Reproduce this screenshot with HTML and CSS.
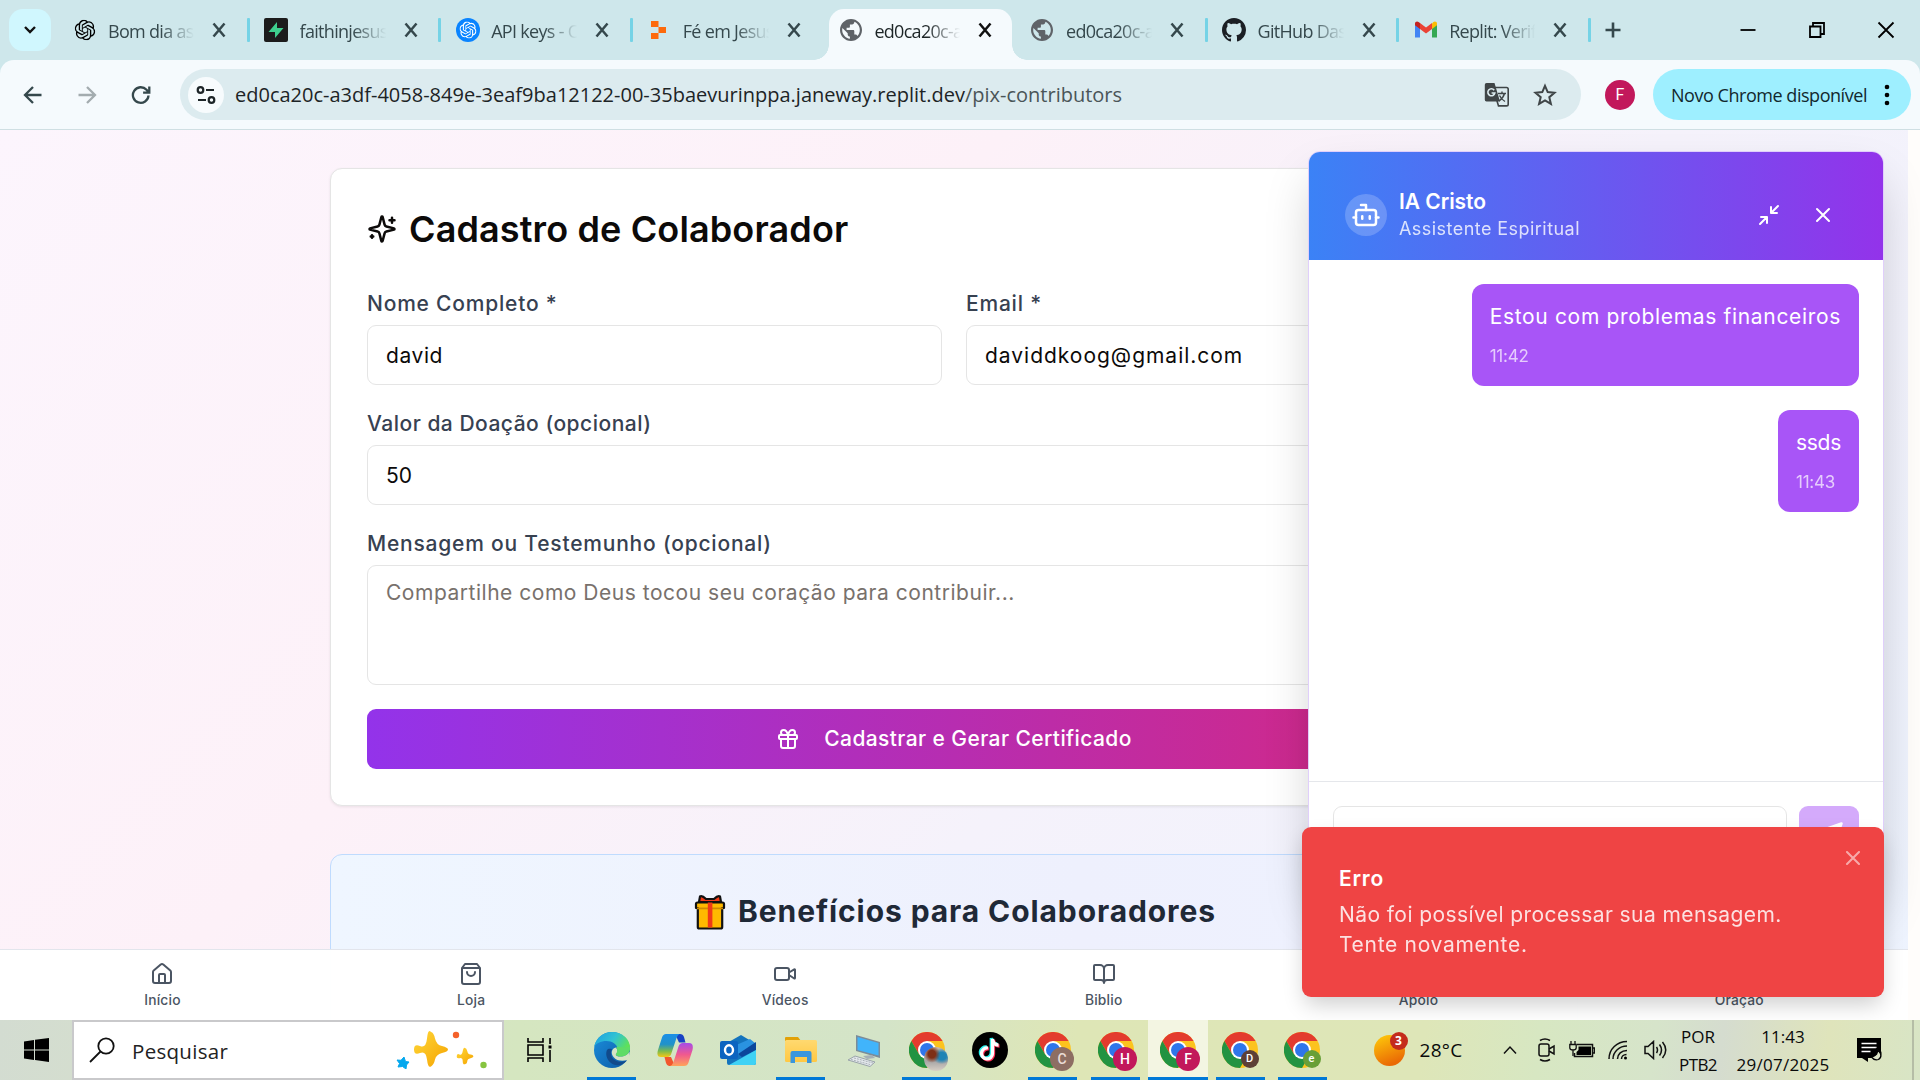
FILE: index.html
```html
<!DOCTYPE html>
<html lang="pt-BR">
<head>
<meta charset="utf-8">
<title>Cadastro de Colaborador</title>
<link rel="stylesheet" href="styles.css">
</head>
<body>
<svg class="defs" aria-hidden="true">
  <defs>
    <symbol id="x" viewBox="0 0 24 24"><path d="M6.500 5.500l11 13M17.500 5.500l-11 13"/></symbol>
    <symbol id="openai" viewBox="0 0 24 24"><path d="M22.2819 9.8211a5.9847 5.9847 0 0 0-.5157-4.9108 6.0462 6.0462 0 0 0-6.5098-2.9A6.0651 6.0651 0 0 0 4.9807 4.1818a5.9847 5.9847 0 0 0-3.9977 2.9 6.0462 6.0462 0 0 0 .7427 7.0966 5.98 5.98 0 0 0 .511 4.9107 6.051 6.051 0 0 0 6.5146 2.9001A5.9847 5.9847 0 0 0 13.2599 24a6.0557 6.0557 0 0 0 5.7718-4.2058 5.9894 5.9894 0 0 0 3.9977-2.9001 6.0557 6.0557 0 0 0-.7475-7.0729zm-9.022 12.6081a4.4755 4.4755 0 0 1-2.8764-1.0408l.1419-.0804 4.7783-2.7582a.7948.7948 0 0 0 .3927-.6813v-6.7369l2.02 1.1686a.071.071 0 0 1 .038.052v5.5826a4.504 4.504 0 0 1-4.4945 4.4944zm-9.6607-4.1254a4.4708 4.4708 0 0 1-.5346-3.0137l.142.0852 4.783 2.7582a.7712.7712 0 0 0 .7806 0l5.8428-3.3685v2.3324a.0804.0804 0 0 1-.0332.0615L9.74 19.9502a4.4992 4.4992 0 0 1-6.1408-1.6464zM2.3408 7.8956a4.485 4.485 0 0 1 2.3655-1.9728V11.6a.7664.7664 0 0 0 .3879.6765l5.8144 3.3543-2.0201 1.1685a.0757.0757 0 0 1-.071 0l-4.8303-2.7865A4.504 4.504 0 0 1 2.3408 7.872zm16.5963 3.8558L13.1038 8.364 15.1192 7.2a.0757.0757 0 0 1 .071 0l4.8303 2.7913a4.4944 4.4944 0 0 1-.6765 8.1042v-5.6772a.79.79 0 0 0-.407-.667zm2.0107-3.0231l-.142-.0852-4.7735-2.7818a.7759.7759 0 0 0-.7854 0L9.409 9.2297V6.8974a.0662.0662 0 0 1 .0284-.0615l4.8303-2.7866a4.4992 4.4992 0 0 1 6.6802 4.66zM8.3065 12.863l-2.02-1.1638a.0804.0804 0 0 1-.038-.0567V6.0742a4.4992 4.4992 0 0 1 7.3757-3.4537l-.142.0805L8.704 5.459a.7948.7948 0 0 0-.3927.6813zm1.0976-2.3654l2.602-1.4998 2.6069 1.4998v2.9994l-2.5974 1.4997-2.6067-1.4997Z"/></symbol>
    <symbol id="globe" viewBox="2 2 20 20"><path d="M12 2C6.48 2 2 6.48 2 12s4.480 10 10 10 10-4.480 10-10S17.520 2 12 2zm-1 17.930c-3.950-.49-7-3.850-7-7.930 0-.62.08-1.210.21-1.790L9 15v1c0 1.100.9 2 2 2v1.930zm6.900-2.540c-.26-.81-1-1.390-1.900-1.390h-1v-3c0-.55-.45-1-1-1H8v-2h2c.55 0 1-.45 1-1V7h2c1.100 0 2-.9 2-2v-.41c2.930 1.190 5 4.060 5 7.410 0 2.080-.8 3.970-2.100 5.390z"/></symbol>
    <symbol id="chrome" viewBox="0 0 36 36">
      <circle cx="18" cy="18" r="18" fill="#fcc31e"/>
      <path d="M2.400 9A18 18 0 0 1 33.600 9H18L10.200 22.500Z" fill="#e33b2e"/>
      <path d="M2.400 9A18 18 0 0 0 18 36L25.800 22.500H10.200Z" fill="#229342"/>
      <circle cx="18" cy="18" r="9" fill="#fff"/>
      <circle cx="18" cy="18" r="7" fill="#2f76ea"/>
    </symbol>
    <linearGradient id="gEdge" x1="0" y1="0" x2="1" y2=".5"><stop offset="0" stop-color="#1b9de2"/><stop offset=".55" stop-color="#31c3d3"/><stop offset="1" stop-color="#62e44f"/></linearGradient>
    <linearGradient id="gEdge2" x1="0" y1="0" x2="1" y2="1"><stop offset="0" stop-color="#1b8fdd"/><stop offset="1" stop-color="#0c59a4"/></linearGradient>
    <linearGradient id="gCopA" x1="0" y1="0" x2="0" y2="1"><stop offset="0" stop-color="#1a8fe8"/><stop offset=".45" stop-color="#2192c9"/><stop offset=".75" stop-color="#7fbb4b"/><stop offset="1" stop-color="#f4c816"/></linearGradient>
    <linearGradient id="gCopB" x1="0" y1="0" x2="0" y2="1"><stop offset="0" stop-color="#a64be8"/><stop offset=".5" stop-color="#f0598f"/><stop offset="1" stop-color="#ffa35a"/></linearGradient>
    <linearGradient id="gSun" x1="0" y1="0" x2=".4" y2="1"><stop offset="0" stop-color="#ffce0a"/><stop offset="1" stop-color="#ea6a05"/></linearGradient>
    <linearGradient id="gStar" x1="0" y1="0" x2="1" y2="1"><stop offset="0" stop-color="#ffd83a"/><stop offset="1" stop-color="#f5a300"/></linearGradient>
    <linearGradient id="gFold" x1="0" y1="0" x2="0" y2="1"><stop offset="0" stop-color="#ffd970"/><stop offset="1" stop-color="#ffc843"/></linearGradient>
  </defs>
</svg>

<header class="tabstrip">
  <div class="tab-search"><svg width="16" height="16" viewBox="0 0 16 16"><path d="M3 5l5 5 5-5"/></svg></div>
  <div class="tab sep"><svg class="fav" viewBox="-2 -2 28 28"><use href="#openai" width="24" height="24"/></svg><span class="label">Bom dia assistente</span><svg class="close"><use href="#x"/></svg></div>
  <div class="tab sep"><svg class="fav" viewBox="0 0 24 24"><rect width="24" height="24" rx="2" fill="#1c1c1c"/><path d="M13 4L4.500 14H11V20L19.500 10H13Z" fill="#3ecf8e"/></svg><span class="label">faithinjesus</span><svg class="close"><use href="#x"/></svg></div>
  <div class="tab sep"><svg class="fav" viewBox="0 0 24 24"><circle cx="12" cy="12" r="12" fill="#0a84ff"/><use href="#openai" x="3.500" y="3.500" width="17" height="17" fill="#fff"/></svg><span class="label">API keys - OpenAI</span><svg class="close"><use href="#x"/></svg></div>
  <div class="tab"><svg class="fav" viewBox="0 0 24 24"><path d="M4 3h7.500v6H4zM4 15h7.500v6H4zM11.500 9H19v6h-7.500z" fill="#fd6a0c"/></svg><span class="label">Fé em Jesus</span><svg class="close"><use href="#x"/></svg></div>
  <div class="tab active"><svg class="fav grey" viewBox="0 0 24 24"><use href="#globe" x="1" y="1" width="22" height="22"/></svg><span class="label">ed0ca20c-a3df</span><svg class="close"><use href="#x"/></svg></div>
  <div class="tab sep"><svg class="fav grey" viewBox="0 0 24 24"><use href="#globe" x="1" y="1" width="22" height="22"/></svg><span class="label">ed0ca20c-a3df</span><svg class="close"><use href="#x"/></svg></div>
  <div class="tab sep"><svg class="fav" viewBox="0 0 16 16" fill="#1b1f24"><path d="M8 0C3.580 0 0 3.580 0 8c0 3.540 2.290 6.530 5.470 7.590.4.070.55-.17.55-.38 0-.19-.01-.82-.01-1.490-2.010.37-2.530-.49-2.690-.94-.09-.23-.48-.94-.82-1.130-.28-.15-.68-.52-.01-.53.63-.01 1.080.58 1.230.82.72 1.210 1.870.87 2.330.66.07-.52.28-.87.51-1.070-1.780-.2-3.640-.89-3.640-3.950 0-.87.31-1.590.82-2.150-.08-.2-.36-1.020.08-2.120 0 0 .67-.21 2.200.82.64-.18 1.320-.27 2-.27.68 0 1.360.09 2 .27 1.530-1.040 2.200-.82 2.200-.82.44 1.100.16 1.920.08 2.120.51.56.82 1.270.82 2.150 0 3.070-1.870 3.750-3.650 3.950.29.25.54.73.54 1.480 0 1.070-.01 1.930-.01 2.200 0 .21.15.46.55.38A8.013 8.013 0 0 0 16 8c0-4.420-3.580-8-8-8z"/></svg><span class="label">GitHub Dashboard</span><svg class="close"><use href="#x"/></svg></div>
  <div class="tab sep"><svg class="fav" viewBox="0 0 24 24"><path d="M1 6v13.500h5V10z" fill="#4285f4"/><path d="M18 10v9.500h5V6z" fill="#34a853"/><path d="M18 5.500V11l5-3.800V5.500c0-2-2.300-2.700-3.600-1.500z" fill="#fbbc04"/><path d="M6 11V5l6 4.600L18 5v6l-6 4.500z" fill="#ea4335"/><path d="M1 5.500v1.700L6 11V5L4.600 4C3.300 2.800 1 3.500 1 5.500z" fill="#c5221f"/></svg><span class="label">Replit: Verify</span><svg class="close"><use href="#x"/></svg></div>
  <div class="new-tab"><svg width="18" height="18" viewBox="0 0 18 18"><path d="M9 1.500v15M1.500 9h15"/></svg></div>
  <div class="win">
    <span><svg width="18" height="18" viewBox="0 0 18 18"><path d="M1.500 9h15"/></svg></span>
    <span><svg width="18" height="18" viewBox="0 0 18 18"><path d="M2 5.500h10.500V16H2zM5 5V2h11v11h-3"/></svg></span>
    <span><svg width="18" height="18" viewBox="0 0 18 18"><path d="M1.500 1.500l15 15M16.500 1.500l-15 15"/></svg></span>
  </div>
</header>

<div class="toolbar-wrap"><div class="toolbar">
  <span class="tb-btn"><svg width="20" height="20" viewBox="0 0 20 20"><path d="M18.500 10H2.500M10 2L2 10l8 8"/></svg></span>
  <span class="tb-btn off"><svg width="20" height="20" viewBox="0 0 20 20"><path d="M1.500 10h16M10 2l8 8-8 8"/></svg></span>
  <span class="tb-btn"><svg width="20" height="20" viewBox="0 0 20 20"><path d="M17.500 10.500A7.800 7.800 0 1 1 15.500 4.800L18 7.500M18.300 1.500v6.200h-6.200"/></svg></span>
  <div class="omnibox">
    <span class="site"><svg width="20" height="20" viewBox="0 0 20 20"><circle cx="4.500" cy="5" r="2.800"/><path d="M10 5h8M2 15h8"/><circle cx="15.500" cy="15" r="2.800"/></svg></span>
    <span class="url">ed0ca20c-a3df-4058-849e-3eaf9ba12122-00-35baevurinppa.janeway.replit.dev<i>/pix-contributors</i></span>
    <svg class="translate" width="26" height="26" viewBox="0 0 26 26"><path d="M9 5.500h13.500a1.700 1.700 0 0 1 1.700 1.700v15a1.700 1.700 0 0 1-1.700 1.700H14.500L9 5.500z" fill="none" stroke="#3f4547" stroke-width="1.600"/><path d="M2.500 1h8l5.500 18.500H2.500A1.700 1.700 0 0 1 .8 17.800V2.700A1.700 1.700 0 0 1 2.500 1z" fill="#3f4547"/><path d="M10.200 8.200A3.500 3.500 0 1 0 10.800 11H7.600" fill="none" stroke="#dcebef" stroke-width="1.600"/><path d="M14 11.500h8M18 9.500v2M20.500 11.500c-.8 3-2.500 5.500-5.500 7.500M15.500 13.500c1 2 3 4.500 5.500 6" fill="none" stroke="#3f4547" stroke-width="1.400"/></svg>
    <svg class="star" width="24" height="24" viewBox="0 0 24 24"><path d="M12 2.800l2.700 6.300 6.800.6-5.200 4.500 1.600 6.700-5.900-3.600-5.900 3.600 1.600-6.700-5.200-4.500 6.800-.6z"/></svg>
  </div>
  <span class="profile">F</span>
  <div class="update"><span>Novo Chrome disponível</span><svg width="6" height="22" viewBox="0 0 6 22"><circle cx="3" cy="3" r="2.300"/><circle cx="3" cy="11" r="2.300"/><circle cx="3" cy="19" r="2.300"/></svg></div>
</div></div>

<div class="viewport">
  <main class="page">
    <section class="card">
      <h1 class="card-title"><svg class="lu" width="30" height="30" viewBox="0 0 24 24"><path d="M9.937 15.500A2 2 0 0 0 8.500 14.063l-6.135-1.582a.5.5 0 0 1 0-.962L8.500 9.936A2 2 0 0 0 9.937 8.500l1.582-6.135a.5.5 0 0 1 .963 0L14.063 8.500A2 2 0 0 0 15.500 9.937l6.135 1.581a.5.5 0 0 1 0 .964L15.500 14.063a2 2 0 0 0-1.437 1.437l-1.582 6.135a.5.5 0 0 1-.963 0zM20 3v4M22 5h-4M4 17v2M5 18H3"/></svg>Cadastro de Colaborador</h1>
      <div class="form">
        <div class="row">
          <label class="field"><span>Nome Completo *</span><div class="input">david</div></label>
          <label class="field"><span>Email *</span><div class="input email">daviddkoog@gmail.com</div></label>
        </div>
        <label class="field amount"><span>Valor da Doação (opcional)</span><div class="input num">50</div></label>
        <label class="field"><span>Mensagem ou Testemunho (opcional)</span><div class="input area">Compartilhe como Deus tocou seu coração para contribuir...</div></label>
        <div class="submit"><svg class="lu" width="24" height="24" viewBox="0 0 24 24"><rect x="3" y="8" width="18" height="4" rx="1"/><path d="M12 8v13M19 12v7a2 2 0 0 1-2 2H7a2 2 0 0 1-2-2v-7M7.500 8a2.500 2.500 0 0 1 0-5A4.800 8 0 0 1 12 8a4.800 8 0 0 1 4.500-5 2.500 2.500 0 0 1 0 5"/></svg>Cadastrar e Gerar Certificado</div>
      </div>
    </section>
    <section class="benefits">
      <h2><svg width="32" height="36" viewBox="0 0 32 36"><path d="M5 8L6 2.500Q8 1 12 5h8q4-4 6-2.500L27 8z" fill="#f03a17" stroke="#111" stroke-width="2.200" stroke-linejoin="round"/><path d="M3.500 8.500h25a1.500 1.500 0 0 1 1.500 1.500v4h-1.800v19a1.500 1.500 0 0 1-1.500 1.500H5.300A1.500 1.500 0 0 1 3.800 33V14H2v-4a1.500 1.500 0 0 1 1.500-1.500z" fill="#ffb900" stroke="#111" stroke-width="2.200" stroke-linejoin="round"/><path d="M3 13.500h26v1.800H3z" fill="#d08a00"/><path d="M13.800 8.500h4.600v25h-4.600z" fill="#f03a17"/></svg>Benefícios para Colaboradores</h2>
    </section>
  </main>

  <aside class="chat">
    <div class="chat-head">
      <span class="bot"><svg class="lu" width="30" height="30" viewBox="0 0 24 24"><path d="M12 8V4H8"/><rect x="4" y="8" width="16" height="12" rx="2"/><path d="M2 14h2M20 14h2M15 13v2M9 13v2"/></svg></span>
      <div class="who"><b>IA Cristo</b><span>Assistente Espiritual</span></div>
      <span class="hb"><svg class="lu" width="24" height="24" viewBox="0 0 24 24"><path d="M4 14h6v6M20 10h-6V4M14 10l7-7M3 21l7-7"/></svg></span>
      <span class="hb"><svg class="lu" width="24" height="24" viewBox="0 0 24 24"><path d="M18 6L6 18M6 6l12 12"/></svg></span>
    </div>
    <div class="msgs">
      <div class="msg"><p>Estou com problemas financeiros</p><time>11:42</time></div>
      <div class="msg short"><p>ssds</p><time>11:43</time></div>
    </div>
    <div class="compose"><div class="chat-input"></div><div class="send"><svg class="lu" width="30" height="30" viewBox="0 0 24 24"><path d="M22 2L15 22l-4-9-9-4zM22 2L11 13"/></svg></div></div>
  </aside>

  <nav class="bottom">
    <a><svg class="lu" width="24" height="24" viewBox="0 0 24 24"><path d="M15 21v-8a1 1 0 0 0-1-1h-4a1 1 0 0 0-1 1v8"/><path d="M3 10a2 2 0 0 1 .709-1.528l7-6a2 2 0 0 1 2.582 0l7 6A2 2 0 0 1 21 10v9a2 2 0 0 1-2 2H5a2 2 0 0 1-2-2z"/></svg>Início</a>
    <a><svg class="lu" width="24" height="24" viewBox="0 0 24 24"><path d="M6 2L3 6v14a2 2 0 0 0 2 2h14a2 2 0 0 0 2-2V6l-3-4zM3 6h18M16 10a4 4 0 0 1-8 0"/></svg>Loja</a>
    <a><svg class="lu" width="24" height="24" viewBox="0 0 24 24"><path d="M16 13l5.223 3.482a.5.5 0 0 0 .777-.416V7.870a.5.5 0 0 0-.752-.432L16 10.500"/><rect x="2" y="6" width="14" height="12" rx="2"/></svg>Vídeos</a>
    <a><svg class="lu" width="24" height="24" viewBox="0 0 24 24"><path d="M12 7v14M3 18a1 1 0 0 1-1-1V4a1 1 0 0 1 1-1h5a4 4 0 0 1 4 4 4 4 0 0 1 4-4h5a1 1 0 0 1 1 1v13a1 1 0 0 1-1 1h-6a3 3 0 0 0-3 3 3 3 0 0 0-3-3z"/></svg>Biblio</a>
    <a><svg class="lu" width="24" height="24" viewBox="0 0 24 24"><path d="M19 14c1.490-1.460 3-3.210 3-5.500A5.500 5.500 0 0 0 16.500 3c-1.760 0-3 .5-4.500 2-1.500-1.500-2.740-2-4.500-2A5.500 5.500 0 0 0 2 8.500c0 2.300 1.500 4.050 3 5.500l7 7z"/></svg>Apoio</a>
    <a><svg class="lu" width="24" height="24" viewBox="0 0 24 24"><path d="M7.900 20A9 9 0 1 0 4 16.100L2 22z"/></svg>Oração</a>
  </nav>

  <div class="toast">
    <b>Erro</b>
    <p><span class="l1">Não foi possível processar sua mensagem.</span><br><span class="l2">Tente novamente.</span></p>
    <svg class="lu" width="24" height="24" viewBox="0 0 24 24"><path d="M18 6L6 18M6 6l12 12"/></svg>
  </div>
</div>

<footer class="taskbar">
  <span class="start"><svg width="25" height="24" viewBox="0 0 25 24"><path d="M0 3.500L10 2v9.500H0zM11 1.800L25 0v11.500H11zM0 12.500h10V22L0 20.500zM11 12.500h14V24l-14-2z"/></svg></span>
  <div class="search"><svg width="26" height="26" viewBox="0 0 26 26"><circle cx="17" cy="9" r="7.700"/><path d="M11.500 14.500L1 25"/></svg><span>Pesquisar</span>
    <svg class="sparks" width="92" height="38" viewBox="0 0 92 38"><path d="M35 1q2.500 0 4 6.500t7 7.500q6 1.500 6 3.500t-6 3.500-7 6.500-4 7-4-7-7-6.500-6-3.500 6-3.500 7-7.500T35 1z" fill="url(#gStar)"/><path d="M69 17q1.500 0 2.300 3.300t3.200 3.200 2.800 1.500-2.800 2.200-3.200 3-2.300 3-2.300-3-3.200-3-2.800-2.200 2.800-1.500 3.200-3.200T69 17z" fill="url(#gStar)"/><path d="M8 26l1.500 4.500 3.500.5-2.500 3-.5 4-3.500-2.500L2 36l1.500-3.500L1 29l4 .3z" fill="#05a8ee" stroke="#05a8ee" stroke-linejoin="round"/><circle cx="60" cy="4" r="3.200" fill="#f4612a"/><circle cx="87.500" cy="34" r="3.200" fill="#86c440"/></svg></div>
  <span class="taskview"><svg width="26" height="24" viewBox="0 0 26 24"><path d="M1 0v4h15V0M1 24v-4h15v4M1 7h15v10H1zM23 0v6M23 12v12" /><path d="M21.500 7.500h3v3h-3z" fill="#000" stroke="none"/></svg></span>
  <div class="apps">
    <span class="app on"><svg width="36" height="36" viewBox="0 0 36 36"><circle cx="18" cy="18" r="18" fill="url(#gEdge2)"/><path d="M0 15C2 5.500 9.500 0 18 0c10.500 0 18 7.500 18 15.500 0 6-4.500 9-9 9-3 0-5.500-1-5-2.500 1-1.500 1.500-2.500 1.500-4.500C23.500 12 18 9 12.500 9 6.500 9 2 11.500 0 15z" fill="url(#gEdge)"/><path d="M13 18c-1.500 3-1 9 4 13 5 3.500 11 3 16-2.500-3 1.500-7 2-10.500.5-5-2-6.500-7-4.500-12-2-.5-4-.5-5 1z" fill="#114a8b"/><path d="M22 15.500c2 2.500 1.500 5 0 6.500-1 2 3 2.800 6 2.500 3-.3 6-2 7.500-5L36 27l-2.500 1c-5 1.500-11 1-14-3s-2-8.500 2.500-9.500z" fill="#d6e4c4"/><path d="M22 15.500C27 14 32 17 36 14v2.500c-.3 4-4 8-9 8-3 0-5.500-1-5-2.500 1.500-2 2-4.500 0-6.500z" fill="#5fdc67"/></svg></span>
    <span class="app"><svg width="36" height="34" viewBox="0 0 36 34"><path d="M20 1h3q3 0 4 3l1.500 5.500H22L18 1z" fill="#1742c4"/><path d="M9 1h13.500q-2 1-3 4l-5 15q-1 4-4 4H4Q-1 24 1 17L5 4.500Q6 1 9 1z" fill="url(#gCopA)"/><path d="M13 33h-1q-2 0-3-3L7.500 24H14l4 9z" fill="#f2572d"/><path d="M27 33H13q2.500-1 3.500-4l5-15.500q1-3.500 4-3.500H32q5 0 3.500 7L31.500 29.500Q30.500 33 27 33z" fill="url(#gCopB)"/></svg></span>
    <span class="app"><svg width="36" height="32" viewBox="0 0 36 32"><path d="M7 9L21 1l15 9v19q0 2-2 2H9q-2 0-2-2z" fill="#1474bd"/><path d="M14 12L30 5l5 4-17 12z" fill="#2a93e0"/><path d="M18 20L36 8v8L22 23z" fill="#0b469b"/><path d="M9 31l27-15v13q0 2-2 2z" fill="#3fd2f5"/><rect y="7" width="18" height="18" rx="2" fill="#0b64c0"/><ellipse cx="9" cy="16" rx="4" ry="4.700" fill="none" stroke="#fff" stroke-width="2.400"/></svg></span>
    <span class="app on"><svg width="34" height="28" viewBox="0 0 34 28"><path d="M1 2q0-1 1-1h12l3 4H1z" fill="#e2a107"/><rect x="1" y="4" width="32" height="22" rx="1.500" fill="url(#gFold)"/><path d="M6.500 27V17q0-2 2-2h17q2 0 2 2v10h-4.500v-6H11v6z" fill="#3a96dd"/></svg></span>
    <span class="app"><svg width="34" height="34" viewBox="0 0 34 34"><path d="M9 2l24 7v16L9 18z" fill="#7b8c99"/><path d="M10.500 4L31.500 10v12.500L10.500 17z" fill="#41b4fb"/><path d="M16 23l9-1 3 3-8 1z" fill="#a5b0b6"/><path d="M1 27l7-4 20 6-5 4.500z" fill="#e4e8ec" stroke="#9aa4aa"/><path d="M4 26.500l19 5M7 25l19 5" stroke="#a9b1b8" stroke-dasharray="2 1"/></svg></span>
    <span class="app on"><svg width="36" height="36"><use href="#chrome"/></svg><em class="photo"></em></span>
    <span class="app"><svg width="36" height="36" viewBox="0 0 36 36"><circle cx="18" cy="18" r="18"/><g fill="none" stroke-width="3.300"><path d="M16 16a5.500 5.500 0 1 0 4.500 5.500V7c.5 4 3 6 6 6" stroke="#25f4ee" transform="translate(-1.200 -1)"/><path d="M16 16a5.500 5.500 0 1 0 4.500 5.500V7c.5 4 3 6 6 6" stroke="#fe2c55" transform="translate(1 1)"/><path d="M16 16a5.500 5.500 0 1 0 4.500 5.500V7c.5 4 3 6 6 6" stroke="#fff"/></g></svg></span>
    <span class="app on"><svg width="36" height="36"><use href="#chrome"/></svg><em class="c">C</em></span>
    <span class="app on"><svg width="36" height="36"><use href="#chrome"/></svg><em class="pink">H</em></span>
    <span class="app on current"><svg width="36" height="36"><use href="#chrome"/></svg><em class="pink">F</em></span>
    <span class="app on late"><svg width="36" height="36"><use href="#chrome"/></svg><em class="small d">D</em></span>
    <span class="app on late"><svg width="36" height="36"><use href="#chrome"/></svg><em class="small e">e</em></span>
  </div>
  <div class="weather"><span class="sun"><svg width="31" height="31" viewBox="0 0 31 31"><circle cx="15.500" cy="15.500" r="15.500" fill="url(#gSun)"/></svg><em>3</em></span><span>28°C</span></div>
  <span class="tray chev"><svg width="14" height="10" viewBox="0 0 14 10"><path d="M1 8.500l6-6.500 6 6.500"/></svg></span>
  <span class="tray cam"><svg width="18" height="24" viewBox="0 0 18 24"><rect x="1" y="6" width="10" height="12" rx="2"/><path d="M11 11l5-3v8l-5-3M2 2.500q5-3 10 0M2 21.500q5 3 10 0"/></svg></span>
  <span class="tray bat"><svg width="26" height="20" viewBox="0 0 26 20"><path d="M8 4.500h15.500v12H5.500V13M24 8h1.500v5H24"/><path d="M9.500 6.500H22v8.500H7.500v-3l2-2z" fill="#000" stroke="none"/><path d="M2 1v3M6 1v3M.8 4.500h6.400V8Q7 10 4 10T.8 8zM4 10v6" stroke-width="1.300"/></svg></span>
  <span class="tray wifi"><svg width="20" height="20" viewBox="0 0 20 20"><path d="M1 19C1 9 9 1.500 19 1.500M5 19C5 11.500 11.500 6 19 6M9.500 19c0-5 4-8.500 9.500-8.500M13.500 19c0-2.500 2-4.500 5-4.500"/><circle cx="17.500" cy="18" r="1.500" fill="#000" stroke="none"/></svg></span>
  <span class="tray vol"><svg width="23" height="20" viewBox="0 0 23 20"><path d="M1 6.500h3l5.500-5v17L4 13.500H1zM12.500 7q2 3 0 6M15.500 4.500q4 5.500 0 11M18.500 2q6.500 8 0 16"/></svg></span>
  <div class="two lang"><span>POR</span><span class="kb">PTB2</span></div>
  <div class="two clock"><span>11:43</span><span class="date">29/07/2025</span></div>
  <span class="notif"><svg width="26" height="26" viewBox="0 0 26 26"><path d="M0 1h24v13a5 5 0 0 1-6 7h-7v4l-6-4H0z"/><path d="M4.500 6.500h15M4.500 10.500h15M4.500 14.500h9" stroke="#fff" stroke-width="1.400"/><path d="M20 12.500q2 5.500-5.500 7.500 3 4 7 2.500 5.500-4-1.500-10z" fill="#dde5c8" stroke="#000" stroke-width="1.300"/></svg></span>
  <span class="peek"></span>
</footer>
</body>
</html>
```
FILE: styles.css
```css
* { box-sizing: border-box; }
body {
  margin: 0;
  width: 1920px;
  height: 1080px;
  overflow: hidden;
  display: flex;
  flex-direction: column;
  font-family: Inter, "Open Sans", sans-serif;
  font-size: 21px;
  line-height: 30px;
}
h1, h2, p { margin: 0; }
svg { flex: none; display: block; }
.defs { position: absolute; width: 0; height: 0; }
.lu { fill: none; stroke: currentColor; stroke-width: 2; stroke-linecap: round; stroke-linejoin: round; }

/* browser tab strip */
.tabstrip {
  height: 60px;
  background: #cee7eb;
  display: flex;
  align-items: center;
  font: 18px/24px "Open Sans", sans-serif;
  color: #35484c;
  flex: none;
}
.tab-search {
  width: 42px; height: 42px;
  margin: 0 5px 0 9px;
  border-radius: 14px;
  background: #d0f7fe;
  display: grid;
  place-items: center;
}
.tab-search svg { fill: none; stroke: #111; stroke-width: 2.4; }
.tab {
  width: 191.6px; height: 60px;
  display: flex;
  align-items: center;
  position: relative;
  padding-left: 16.5px;
  flex: none;
}
.fav { width: 24px; height: 24px; margin-right: 11.5px; }
.fav.grey { fill: #5f6368; }
.label {
  width: 88px;
  margin-top: 2px;
  overflow: hidden;
  white-space: nowrap;
  letter-spacing: -0.7px;
  -webkit-mask-image: linear-gradient(90deg, #000 60%, transparent 98%);
  mask-image: linear-gradient(90deg, #000 60%, transparent 98%);
}
.close { width: 24px; height: 24px; margin-left: 11px; stroke: #35484c; stroke-width: 2.5; }
.tab.sep::after {
  content: "";
  position: absolute;
  right: -2px; top: 18px;
  width: 3px; height: 24px;
  border-radius: 1px;
  background: #75d3e6;
}
.tab.active { color: #1c2426; z-index: 1; }
.tab.active .close { stroke: #111; }
.tab.active > * { position: relative; z-index: 1; }
.tab.active::before {
  content: "";
  position: absolute;
  left: 6.500px; top: 9px;
  width: 183px; height: 51px;
  border-radius: 15px 15px 0 0;
  background: #f5fafd;
}
.tab.active::after {
  content: "";
  position: absolute;
  left: -8.500px; bottom: 0;
  width: 213px; height: 15px;
  background:
    radial-gradient(circle at 0 0, transparent 14.5px, #f5fafd 15px) left / 15px 15px no-repeat,
    radial-gradient(circle at 100% 0, transparent 14.5px, #f5fafd 15px) right / 15px 15px no-repeat;
  z-index: 0;
}
.new-tab { width: 42px; margin-left: 3px; display: grid; place-items: center; }
.new-tab svg { stroke: #35484c; stroke-width: 2.6; }
.win { margin-left: auto; display: flex; }
.win span { width: 69px; display: grid; place-items: center; }
.win svg { fill: none; stroke: #000; stroke-width: 1.8; }

/* toolbar */
.toolbar-wrap { background: #cee7eb; flex: none; }
.toolbar {
  height: 70px;
  border-bottom: 1px solid #cfdfe3;
  border-radius: 14px 14px 0 0;
  background: #f5fafd;
  display: flex;
  align-items: center;
  padding-left: 6px;
}
.tb-btn { width: 54px; display: grid; place-items: center; }
.tb-btn svg { fill: none; stroke: #35484c; stroke-width: 2.3; }
.tb-btn.off svg { stroke: #a3acaf; }
.omnibox {
  width: 1401px; height: 51px;
  margin-left: 12px;
  border-radius: 26px;
  background: #dcebef;
  display: flex;
  align-items: center;
  padding: 0 24px 0 8px;
}
.site { width: 36px; height: 36px; border-radius: 50%; background: #f7fbfd; display: grid; place-items: center; }
.site svg { fill: none; stroke: #1d2528; stroke-width: 2.2; }
.url { font: 20px/28px "Open Sans", sans-serif; color: #1d2426; margin-left: 11px; white-space: nowrap; }
.url i { font-style: normal; color: #4a5558; }
.translate { margin-left: auto; margin-right: 23px; }
.star { fill: none; stroke: #3f4547; stroke-width: 2; }
.profile {
  width: 30px; height: 30px;
  border-radius: 50%;
  margin-left: 24px;
  background: #c2185b;
  color: #fff;
  font: 16px/30px Roboto, sans-serif;
  text-align: center;
}
.update {
  width: 258px; height: 51px;
  margin-left: 18px;
  padding-left: 18px;
  border-radius: 26px;
  background: #9eefff;
  color: #12282d;
  display: flex;
  align-items: center;
  font: 18px/24px "Open Sans", sans-serif;
  letter-spacing: -0.46px;
}
.update svg { margin-left: 17px; }

/* web page */
.viewport {
  height: 890px;
  position: relative;
  overflow: hidden;
  background: #fffdfb;
  flex: none;
}
.page {
  width: 1908px; height: 890px;
  padding-top: 38px;
  display: flex;
  flex-direction: column;
  align-items: center;
  gap: 48px;
  background: linear-gradient(135deg, #fcf5fd 0%, #fdf1f8 36%, #f5f2fb 60%, #edf3fe 100%);
}
.card {
  width: 1248px;
  padding: 36px;
  border: 1px solid #e5e5e5;
  border-radius: 12px;
  background: #fff;
  box-shadow: 0 1px 3px rgba(0, 0, 0, .08);
  flex: none;
}
.card-title {
  display: flex;
  align-items: center;
  gap: 12px;
  font-size: 36px;
  line-height: 48px;
  font-weight: 600;
  letter-spacing: .13px;
  color: #0c0a09;
  margin-bottom: 36px;
}
.form { display: flex; flex-direction: column; gap: 24px; }
.row { display: grid; grid-template-columns: 1fr 1fr; gap: 24px; }
.field { display: flex; flex-direction: column; gap: 6px; color: #374151; font-weight: 500; letter-spacing: .79px; }
.amount { letter-spacing: .5px; }
.input {
  height: 60px;
  border: 1px solid #e5e5e5;
  border-radius: 9px;
  padding: 15px 18px 0;
  background: #fff;
  color: #0c0a09;
  font-weight: 400;
  letter-spacing: .58px;
}
.input.email { letter-spacing: .98px; }
.input.num { letter-spacing: 0; }
.input.area { height: 120px; padding-top: 12px; color: #78716c; letter-spacing: .52px; }
.submit {
  height: 60px;
  border-radius: 9px;
  background: linear-gradient(90deg, #9333ea, #db2777);
  color: #fff;
  font-weight: 500;
  letter-spacing: .4px;
  display: flex;
  align-items: center;
  justify-content: center;
  gap: 24px;
}
.benefits {
  width: 1248px; height: 400px;
  padding: 36px 34px 36px 36px;
  border: 1px solid #bfdbfe;
  border-radius: 12px;
  background: linear-gradient(90deg, #eff6ff, #eef0fd 60%, #eef2ff);
  flex: none;
}
.benefits h2 {
  display: flex;
  justify-content: center;
  align-items: center;
  gap: 12px;
  font-size: 30px;
  line-height: 41px;
  font-weight: 700;
  letter-spacing: .9px;
  color: #1f2937;
}

/* chat window */
.chat {
  position: absolute;
  left: 1308px; top: 21px;
  width: 576px; height: 741px;
  border: 1px solid #e0cffb;
  border-radius: 12px;
  background: #fff;
  box-shadow: 0 25px 50px -8px rgba(0, 0, 0, .22);
  display: flex;
  flex-direction: column;
  overflow: hidden;
}
.chat-head {
  height: 108px;
  padding: 17px 36px 0;
  display: flex;
  align-items: center;
  background: linear-gradient(90deg, #3b82f6, #9333ea);
  color: #fff;
}
.bot { width: 42px; height: 42px; border-radius: 50%; background: rgba(255, 255, 255, .2); display: grid; place-items: center; margin-right: 12px; }
.who { flex: 1; display: flex; flex-direction: column; }
.who b { font-weight: 600; line-height: 28px; letter-spacing: -.05px; }
.who span { font-size: 18px; line-height: 26px; letter-spacing: .45px; opacity: .8; }
.hb { width: 48px; display: grid; place-items: center; margin-left: 6px; }
.msgs { height: 521px; padding: 24px; display: flex; flex-direction: column; align-items: flex-end; gap: 24px; }
.msg { padding: 18px; border-radius: 12px; background: #a855f7; color: #fff; }
.msg p { letter-spacing: .67px; margin: 0 0 12px; }
.msg.short p { letter-spacing: -.27px; }
.msg time { display: block; font-size: 17px; line-height: 24px; letter-spacing: -.22px; opacity: .7; }
.compose { border-top: 1px solid #e5e7eb; padding: 24px; display: flex; gap: 12px; }
.chat-input { flex: 1; height: 60px; border: 1px solid #e5e5e5; border-radius: 9px; }
.send { width: 60px; height: 60px; border-radius: 9px; background: #d4aafb; color: #fff; display: grid; place-items: center; }

/* bottom navigation */
.bottom {
  position: absolute;
  left: 0; bottom: 0;
  width: 1908px; height: 71px;
  padding: 12px 6px 0;
  border-top: 1px solid #e2e5ec;
  background: rgba(255, 255, 255, .98);
  display: flex;
  justify-content: space-around;
}
.bottom a {
  display: flex;
  flex-direction: column;
  align-items: center;
  gap: 5px;
  color: #4b5563;
  font-size: 13.8px;
  line-height: 18px;
  font-weight: 450;
  letter-spacing: .2px;
}

/* error toast */
.toast {
  position: absolute;
  left: 1302px; top: 697px;
  width: 582px; height: 170px;
  padding: 37px 37px 0;
  border-radius: 9px;
  background: #ef4444;
  color: #fff;
  box-shadow: 0 10px 22px -3px rgba(0, 0, 0, .2);
}
.toast b { display: block; font-weight: 600; letter-spacing: .8px; margin-bottom: 6px; }
.toast p { opacity: .84; }
.l1 { letter-spacing: .42px; }
.l2 { letter-spacing: .7px; }
.toast svg { position: absolute; right: 19px; top: 19px; opacity: .55; }

/* taskbar */
.taskbar {
  height: 60px;
  display: flex;
  align-items: stretch;
  background: linear-gradient(97deg, #d3dcd1 0, #d5dfcd 8%, #d5e6c0 27%, #d4e4c8 46%, #dee6b6 56%, #dee6b8 74%, #d7e7c2 80%, #d6e4ca 86%, #d5dccf 89.500%, #dfe4bb 95%, #d8e5c6 100%);
  font-family: "Open Sans", sans-serif;
  color: #0a0a0a;
  flex: none;
}
.start, .taskview { width: 72px; display: grid; place-items: center; }
.search {
  width: 432px;
  border: 2px solid #c9c9cb;
  background: #fff;
  display: flex;
  align-items: center;
  padding-left: 15px;
}
.search > svg:first-child { fill: none; stroke: #111; stroke-width: 1.8; }
.search > span { font-size: 20.5px; letter-spacing: .3px; margin: 2px 0 0 17px; color: #222; width: 264px; }
.taskview svg { fill: none; stroke: #000; stroke-width: 1.6; }
.apps { display: flex; margin-left: 4px; }
.app { width: 63px; position: relative; display: grid; place-items: center; }
.app.on::after { content: ""; position: absolute; left: 7px; bottom: 0; width: 49px; height: 3px; background: #0078d7; }
.app.current { width: 61.5px; background: linear-gradient(#f3f5e2, #f3f5e2) center / 60px 60px no-repeat; }
.app.current::after { left: 1px; width: 60px; }
.app.late { width: 62px; }
.app em {
  position: absolute;
  left: 29px; top: 27px;
  width: 24px; height: 24px;
  border-radius: 50%;
  font: 500 14px/24px Roboto, sans-serif;
  text-align: center;
  color: #fff;
}
.app .c { background: #8d6e63; color: #eadcd6; }
.app .pink { background: #c2185b; }
.app .small { width: 18px; height: 18px; left: 32px; top: 30px; font-size: 11px; line-height: 18px; }
.app .d { background: #5d4037; }
.app .e { background: #689f38; }
.app .photo { background: radial-gradient(ellipse at 33% 30%, #7e2f16 0 16%, transparent 36%), radial-gradient(ellipse at 74% 38%, #1f84b5 0 18%, transparent 38%), linear-gradient(#cbb9a8, #a9a6a6 60%, #d8d0c6); }
.weather { width: 158.5px; padding-left: 41px; display: flex; align-items: center; gap: 15px; font-size: 19px; letter-spacing: .3px; }
.sun { position: relative; }
.sun em {
  position: absolute;
  right: -3px; top: -3px;
  width: 18px; height: 18px;
  border-radius: 50%;
  background: #c42b1c;
  color: #fff;
  font: 700 12px/18px "Open Sans", sans-serif;
  text-align: center;
}
.tray { display: grid; place-items: center; }
.tray svg { fill: none; stroke: #111; stroke-width: 1.5; }
.chev { width: 38px; }
.cam { width: 36px; }
.bat { width: 34px; }
.wifi { width: 38px; }
.vol { width: 36px; }
.two { display: flex; flex-direction: column; align-items: center; font-size: 17px; line-height: 27.500px; padding-top: 3px; }
.lang { width: 50px; }
.kb { letter-spacing: -.57px; }
.date { letter-spacing: .28px; }
.clock { width: 120px; }
.notif { width: 54px; display: grid; place-items: center; }
.notif svg { margin-bottom: 1px; }
.peek { margin-left: 15px; border-left: 2px solid #b5bda6; }
```
